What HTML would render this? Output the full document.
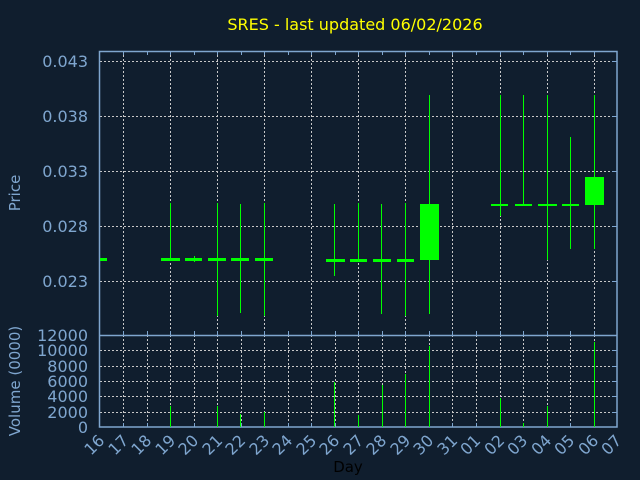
<!DOCTYPE html>
<html><head><meta charset="utf-8"><style>
html,body{margin:0;padding:0;background:#101e2e;}
svg{display:block;font-family:"DejaVu Sans","Liberation Sans",sans-serif;}
</style></head><body>
<svg width="640" height="480" viewBox="0 0 640 480" xmlns="http://www.w3.org/2000/svg">
<rect width="640" height="480" fill="#101e2e"/>
<text x="355" y="30" fill="#ffff00" font-size="16" text-anchor="middle">SRES - last updated 06/02/2026</text>
<g stroke="#c8c8c8" stroke-width="1" stroke-dasharray="2,2" fill="none">
<path d="M100 61.5H617M100 116.5H617M100 171.5H617M100 226.5H617M100 281.5H617"/>
<path d="M123.5 51V335M170.5 51V335M217.5 51V335M264.5 51V335M311.5 51V335M358.5 51V335M405.5 51V335M452.5 51V335M500.5 51V335M547.5 51V335M594.5 51V335"/>
<path d="M100 350.5H617M100 366.5H617M100 381.5H617M100 396.5H617M100 412.5H617"/>
<path d="M123.5 335V427M147.5 335V427M170.5 335V427M194.5 335V427M217.5 335V427M241.5 335V427M264.5 335V427M288.5 335V427M311.5 335V427M335.5 335V427M358.5 335V427M382.5 335V427M405.5 335V427M429.5 335V427M452.5 335V427M476.5 335V427M500.5 335V427M523.5 335V427M547.5 335V427M570.5 335V427M594.5 335V427"/>
</g>
<g stroke="#7fa6cf" stroke-width="1.5" fill="none">
<rect x="99.5" y="51.5" width="517.5" height="375.5"/>
<path d="M99.5 335.5H617"/>
</g>
<g stroke="#7fa6cf" stroke-width="1">
<path d="M123.5 51v4M147.5 51v4M170.5 51v4M194.5 51v4M217.5 51v4M241.5 51v4M264.5 51v4M288.5 51v4M311.5 51v4M335.5 51v4M358.5 51v4M382.5 51v4M405.5 51v4M429.5 51v4M452.5 51v4M476.5 51v4M500.5 51v4M523.5 51v4M547.5 51v4M570.5 51v4M594.5 51v4"/>
<path d="M123.5 335v-4M147.5 335v-4M170.5 335v-4M194.5 335v-4M217.5 335v-4M241.5 335v-4M264.5 335v-4M288.5 335v-4M311.5 335v-4M335.5 335v-4M358.5 335v-4M382.5 335v-4M405.5 335v-4M429.5 335v-4M452.5 335v-4M476.5 335v-4M500.5 335v-4M523.5 335v-4M547.5 335v-4M570.5 335v-4M594.5 335v-4"/>
<path d="M123.5 427v-4M147.5 427v-4M170.5 427v-4M194.5 427v-4M217.5 427v-4M241.5 427v-4M264.5 427v-4M288.5 427v-4M311.5 427v-4M335.5 427v-4M358.5 427v-4M382.5 427v-4M405.5 427v-4M429.5 427v-4M452.5 427v-4M476.5 427v-4M500.5 427v-4M523.5 427v-4M547.5 427v-4M570.5 427v-4M594.5 427v-4"/>
<path d="M617 61.5h-5M617 116.5h-5M617 171.5h-5M617 226.5h-5M617 281.5h-5M617 350.5h-5M617 366.5h-5M617 381.5h-5M617 396.5h-5M617 412.5h-5"/>
</g>
<g fill="#7fa6cf" font-size="16" text-anchor="end">
<text x="88" y="67">0.043</text><text x="88" y="122">0.038</text><text x="88" y="177">0.033</text><text x="88" y="232">0.028</text><text x="88" y="287">0.023</text>
</g>
<g fill="#7fa6cf" font-size="16" text-anchor="end">
<text x="88" y="341">12000</text><text x="88" y="356">10000</text><text x="88" y="372">8000</text><text x="88" y="387">6000</text><text x="88" y="402">4000</text><text x="88" y="418">2000</text><text x="88" y="433">0</text>
</g>
<text transform="translate(20,193) rotate(-90)" fill="#7fa6cf" font-size="15" text-anchor="middle">Price</text>
<text transform="translate(20,381) rotate(-90)" fill="#7fa6cf" font-size="15" text-anchor="middle">Volume (0000)</text>
<text x="348" y="472" fill="#000" font-size="15" text-anchor="middle">Day</text>
<g fill="#7fa6cf" font-size="16">
<text transform="translate(91,456) rotate(-45)">16</text>
<text transform="translate(115,456) rotate(-45)">17</text>
<text transform="translate(138,456) rotate(-45)">18</text>
<text transform="translate(162,456) rotate(-45)">19</text>
<text transform="translate(185,456) rotate(-45)">20</text>
<text transform="translate(209,456) rotate(-45)">21</text>
<text transform="translate(232,456) rotate(-45)">22</text>
<text transform="translate(256,456) rotate(-45)">23</text>
<text transform="translate(279,456) rotate(-45)">24</text>
<text transform="translate(303,456) rotate(-45)">25</text>
<text transform="translate(326,456) rotate(-45)">26</text>
<text transform="translate(350,456) rotate(-45)">27</text>
<text transform="translate(373,456) rotate(-45)">28</text>
<text transform="translate(397,456) rotate(-45)">29</text>
<text transform="translate(420,456) rotate(-45)">30</text>
<text transform="translate(444,456) rotate(-45)">31</text>
<text transform="translate(467,456) rotate(-45)">01</text>
<text transform="translate(491,456) rotate(-45)">02</text>
<text transform="translate(514,456) rotate(-45)">03</text>
<text transform="translate(538,456) rotate(-45)">04</text>
<text transform="translate(561,456) rotate(-45)">05</text>
<text transform="translate(585,456) rotate(-45)">06</text>
<text transform="translate(608,456) rotate(-45)">07</text>
</g>
<g stroke="#00ff00" stroke-width="1" fill="none">
<path d="M170.5 203V260M194.5 256V262M217.5 203V316M240.5 204V313M264.5 203V316M334.5 204V276M358.5 203V262M381.5 204V314M405.5 203V316M429.5 95V314M500.5 95V216M523.5 95V206M547.5 95V260M570.5 137V249M594.5 95V249"/>
<path d="M170.5 406V427M217.5 406V427M240.5 414V427M264.5 412V427M334.5 382V427M358.5 415V427M382.5 385V427M405.5 374V427M429.5 346V427M500.5 398V427M523.5 423V427M547.5 406V427M594.5 342V427"/>
</g>
<g fill="#00ff00">
<rect x="100" y="258" width="7" height="3"/>
<rect x="161" y="258" width="19" height="3"/>
<rect x="185" y="258" width="17" height="3"/>
<rect x="208" y="258" width="18" height="3"/>
<rect x="231" y="258" width="18" height="3"/>
<rect x="255" y="258" width="18" height="3"/>
<rect x="326" y="259" width="19" height="3"/>
<rect x="350" y="259" width="17" height="3"/>
<rect x="373" y="259" width="18" height="3"/>
<rect x="397" y="259" width="17" height="3"/>
<rect x="420" y="204" width="19" height="56"/>
<rect x="491" y="204" width="17" height="2"/>
<rect x="515" y="204" width="17" height="2"/>
<rect x="538" y="204" width="19" height="2"/>
<rect x="562" y="204" width="17" height="2"/>
<rect x="585" y="177" width="19" height="28"/>
</g>
</svg>
</body></html>
